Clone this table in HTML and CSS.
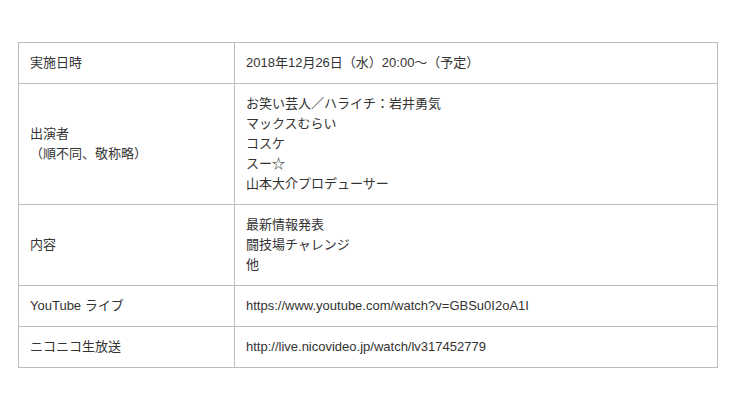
FILE: index.html
```html
<!DOCTYPE html>
<html lang="ja">
<head>
<meta charset="utf-8">
<link rel="stylesheet" href="styles.css">
</head>
<body>
<table class="info">
  <tr><th>実施日時</th><td>2018年12月26日（水）20:00～（予定）</td></tr>
  <tr><th>出演者<br>（順不同、敬称略）</th><td>お笑い芸人／ハライチ：岩井勇気<br>マックスむらい<br>コスケ<br>スー☆<br>山本大介プロデューサー</td></tr>
  <tr><th>内容</th><td>最新情報発表<br>闘技場チャレンジ<br>他</td></tr>
  <tr><th>YouTube ライブ</th><td>https://www.youtube.com/watch?v=GBSu0I2oA1I</td></tr>
  <tr><th>ニコニコ生放送</th><td>http://live.nicovideo.jp/watch/lv317452779</td></tr>
</table>
</body>
</html>
```
FILE: styles.css
```css
html, body {
  margin: 0;
  padding: 0;
  background: #fff;
}
body {
  padding: 42px 0 0 18px;
  font-family: "Liberation Sans", "Noto Sans CJK JP", sans-serif;
  font-size: 13px;
  color: #333;
}
.info {
  border-collapse: collapse;
  width: 700px;
  table-layout: fixed;
}
.info th, .info td {
  border: 1px solid #bdbdbd;
  padding: 10px 11px;
  line-height: 20px;
  text-align: left;
  font-weight: normal;
  vertical-align: middle;
}
.info th {
  width: 193px;
}
```
